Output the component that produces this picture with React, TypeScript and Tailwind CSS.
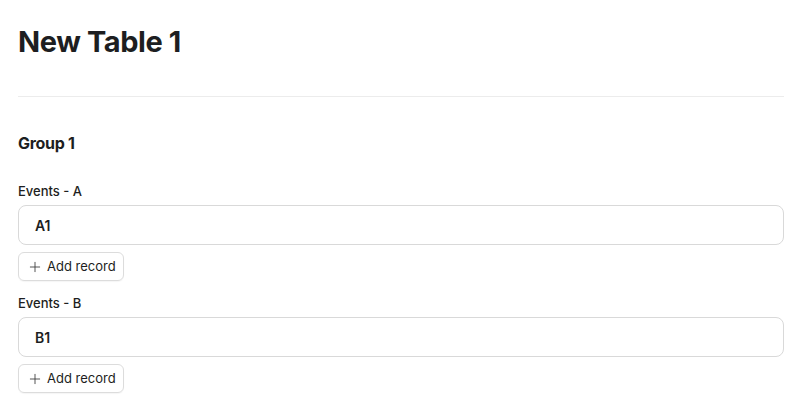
import { Plus } from 'lucide-react';

const groups = [
  { label: 'Events - A', value: 'A1' },
  { label: 'Events - B', value: 'B1' },
];

export default function App() {
  return (
    <div className="min-h-screen bg-white pl-[18px] pr-[19px] pt-[24px] text-[#1d1e21] font-['Inter',sans-serif]">
      <h1 className="text-[29px] leading-[36px] font-bold tracking-[-0.4px]">New Table 1</h1>

      <div className="mt-[36px] border-t border-[#ececec]" />

      <h2 className="mt-[34px] text-[16px] leading-[24px] font-bold tracking-[-0.3px]">Group 1</h2>

      <div className="mt-[27px] flex flex-col">
        {groups.map((g, i) => (
          <div key={g.label} className={i > 0 ? 'mt-[13px]' : ''}>
            <div className="text-[13px] leading-[18px] font-medium">{g.label}</div>
            <div className="mt-[5px] h-[40px] flex items-center rounded-[8px] border border-[#d9d9d9] px-[16px] text-[14px] font-semibold">
              {g.value}
            </div>
            <button className="mt-[7px] h-[29px] flex items-center gap-[4px] rounded-[6px] border border-[#dcdcdc] pl-[8px] pr-[7px] text-[13px] font-normal shadow-[0_1px_1px_rgba(0,0,0,0.04)]">
              <Plus size={16} strokeWidth={1.3} className="text-[#3a3a3a]" />
              Add record
            </button>
          </div>
        ))}
      </div>
    </div>
  );
}
